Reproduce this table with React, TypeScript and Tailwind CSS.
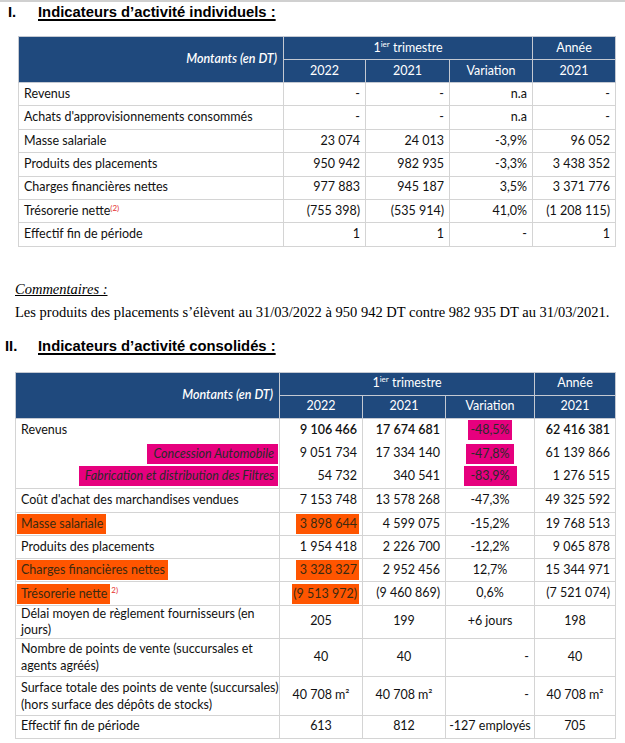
import React from "react"

const body = { fontFamily: "Lato, 'Open Sans', sans-serif" }

type Row1 = { label: React.ReactNode; v: string[] }

const rows1: Row1[] = [
  { label: "Revenus", v: ["-", "-", "n.a", "-"] },
  { label: "Achats d'approvisionnements consommés", v: ["-", "-", "n.a", "-"] },
  { label: "Masse salariale", v: ["23 074", "24 013", "-3,9%", "96 052"] },
  { label: "Produits des placements", v: ["950 942", "982 935", "-3,3%", "3 438 352"] },
  { label: "Charges financières nettes", v: ["977 883", "945 187", "3,5%", "3 371 776"] },
  {
    label: (
      <>
        Trésorerie nette<sup className="text-[8px] text-[#e53030] relative -top-[4px]">(2)</sup>
      </>
    ),
    v: ["(755 398)", "(535 914)", "41,0%", "(1 208 115)"],
  },
  { label: "Effectif fin de période", v: ["1", "1", "-", "1"] },
]

function Header() {
  return (
    <thead className="bg-[#1f497d] text-white">
      <tr className="h-[23px]">
        <td
          rowSpan={2}
          className="border border-[#c4c9d2] text-right pr-[6px] italic font-semibold align-middle"
        >
          Montants (en DT)
        </td>
        <td colSpan={3} className="border border-[#c4c9d2] text-center">
          1<sup className="text-[8px] relative -top-[5px]">ier</sup> trimestre
        </td>
        <td className="border border-[#c4c9d2] text-center">Année</td>
      </tr>
      <tr className="h-[23px]">
        <td className="border border-[#c4c9d2] text-center">2022</td>
        <td className="border border-[#c4c9d2] text-center">2021</td>
        <td className="border border-[#c4c9d2] text-center">Variation</td>
        <td className="border border-[#c4c9d2] text-center">2021</td>
      </tr>
    </thead>
  )
}

function Table1() {
  return (
    <table
      className="ml-[18px] mt-[14px] w-[597px] border-collapse table-fixed text-[12.5px] text-[#111]"
      style={body}
    >
      <colgroup>
        <col className="w-[265px]" />
        <col className="w-[82px]" />
        <col className="w-[84px]" />
        <col className="w-[83px]" />
        <col className="w-[83px]" />
      </colgroup>
      <Header />
      <tbody>
        {rows1.map((r, i) => (
          <tr key={i} className="h-[23.4px]">
            <td className="border border-[#d4d4d4] pl-[5px]">{r.label}</td>
            {r.v.map((x, j) => (
              <td key={j} className="border border-[#d4d4d4] text-right pr-[5px]">
                {x}
              </td>
            ))}
          </tr>
        ))}
      </tbody>
    </table>
  )
}

const cell = "border border-[#d4d4d4]"
const mag = "inline-block bg-[#e6007e] leading-[20px] text-[#2a2a2a]"
const org = "inline-block bg-[#ff5500] leading-[20px] text-[#3b2a10]"

function Table2() {
  return (
    <table
      className="ml-[15px] mt-[16px] w-[600px] border-collapse table-fixed text-[12.5px] text-[#111]"
      style={body}
    >
      <colgroup>
        <col className="w-[264px]" />
        <col className="w-[83px]" />
        <col className="w-[83px]" />
        <col className="w-[89px]" />
        <col className="w-[81px]" />
      </colgroup>
      <Header />
      <tbody>
        <tr className="h-[24px]">
          <td className="border-l border-r border-t border-[#d4d4d4] pl-[5px]">Revenus</td>
          <td className="border-x border-[#d4d4d4] text-right pr-[5px] font-semibold">9 106 466</td>
          <td className="border-x border-[#d4d4d4] text-right pr-[5px] font-semibold">17 674 681</td>
          <td className="border-x border-[#d4d4d4] text-center">
            <span className={`${mag} w-[44px]`}>-48,5%</span>
          </td>
          <td className="border-x border-[#d4d4d4] text-right pr-[5px] font-semibold">62 416 381</td>
        </tr>
        <tr className="h-[23px]">
          <td className="border-x border-[#d4d4d4] text-right pr-[1px]">
            <span className={`${mag} italic pl-[6px] pr-[4px]`}>Concession Automobile</span>
          </td>
          <td className="border-x border-[#d4d4d4] text-right pr-[5px]">9 051 734</td>
          <td className="border-x border-[#d4d4d4] text-right pr-[5px]">17 334 140</td>
          <td className="border-x border-[#d4d4d4] text-center">
            <span className={`${mag} w-[48px]`}>-47,8%</span>
          </td>
          <td className="border-x border-[#d4d4d4] text-right pr-[5px]">61 139 866</td>
        </tr>
        <tr className="h-[23px]">
          <td className="border-x border-b border-[#d4d4d4] text-right pr-[1px]">
            <span className={`${mag} italic pl-[6px] pr-[4px]`}>
              Fabrication et distribution des Filtres
            </span>
          </td>
          <td className="border-x border-b border-[#d4d4d4] text-right pr-[5px]">54 732</td>
          <td className="border-x border-b border-[#d4d4d4] text-right pr-[5px]">340 541</td>
          <td className="border-x border-b border-[#d4d4d4] text-center">
            <span className={`${mag} w-[53px]`}>-83,9%</span>
          </td>
          <td className="border-x border-b border-[#d4d4d4] text-right pr-[5px]">1 276 515</td>
        </tr>
        <tr className="h-[24.7px]">
          <td className={`${cell} pl-[5px]`}>Coût d'achat des marchandises vendues</td>
          <td className={`${cell} text-right pr-[5px]`}>7 153 748</td>
          <td className={`${cell} text-right pr-[5px]`}>13 578 268</td>
          <td className={`${cell} text-center`}>-47,3%</td>
          <td className={`${cell} text-right pr-[5px]`}>49 325 592</td>
        </tr>
        <tr className="h-[22.6px]">
          <td className={`${cell} pl-[1px]`}>
            <span className={`${org} pl-[4px] pr-[3px]`}>Masse salariale</span>
          </td>
          <td className={`${cell} text-right pr-[3px]`}>
            <span className={`${org} pr-[2px] pl-[4px]`}>3 898 644</span>
          </td>
          <td className={`${cell} text-right pr-[5px]`}>4 599 075</td>
          <td className={`${cell} text-center`}>-15,2%</td>
          <td className={`${cell} text-right pr-[5px]`}>19 768 513</td>
        </tr>
        <tr className="h-[23.4px]">
          <td className={`${cell} pl-[5px]`}>Produits des placements</td>
          <td className={`${cell} text-right pr-[5px]`}>1 954 418</td>
          <td className={`${cell} text-right pr-[5px]`}>2 226 700</td>
          <td className={`${cell} text-center`}>-12,2%</td>
          <td className={`${cell} text-right pr-[5px]`}>9 065 878</td>
        </tr>
        <tr className="h-[23px]">
          <td className={`${cell} pl-[1px]`}>
            <span className={`${org} pl-[4px] pr-[3px]`}>Charges financières nettes</span>
          </td>
          <td className={`${cell} text-right pr-[3px]`}>
            <span className={`${org} pr-[2px] pl-[4px]`}>3 328 327</span>
          </td>
          <td className={`${cell} text-right pr-[5px]`}>2 952 456</td>
          <td className={`${cell} text-center`}>12,7%</td>
          <td className={`${cell} text-right pr-[5px]`}>15 344 971</td>
        </tr>
        <tr className="h-[23.3px]">
          <td className={`${cell} pl-[1px]`}>
            <span className={`${org} pl-[4px] pr-[3px]`}>Trésorerie nette</span>
            <sup className="text-[8px] text-[#e53030] relative -top-[5px] ml-[1px]">2)</sup>
          </td>
          <td className={`${cell} text-right pr-[3px] overflow-hidden whitespace-nowrap`}>
            <span className={`${org} pr-[2px] pl-[1px]`}>(9 513 972)</span>
          </td>
          <td className={`${cell} text-right pr-[5px]`}>(9 460 869)</td>
          <td className={`${cell} text-center`}>0,6%</td>
          <td className={`${cell} text-right pr-[5px]`}>(7 521 074)</td>
        </tr>
        <tr className="h-[33px]">
          <td className={`${cell} pl-[5px] leading-[16px]`}>
            Délai moyen de règlement fournisseurs (en jours)
          </td>
          <td className={`${cell} text-center`}>205</td>
          <td className={`${cell} text-center`}>199</td>
          <td className={`${cell} text-center`}>+6 jours</td>
          <td className={`${cell} text-center`}>198</td>
        </tr>
        <tr className="h-[38px]">
          <td className={`${cell} pl-[5px] leading-[17px]`}>
            Nombre de points de vente (succursales et agents agréés)
          </td>
          <td className={`${cell} text-center`}>40</td>
          <td className={`${cell} text-center`}>40</td>
          <td className={`${cell} text-right pr-[5px]`}>-</td>
          <td className={`${cell} text-center`}>40</td>
        </tr>
        <tr className="h-[39px]">
          <td className={`${cell} pl-[5px] leading-[17px]`}>
            Surface totale des points de vente (succursales) (hors surface des dépôts de stocks)
          </td>
          <td className={`${cell} text-center`}>40 708 m²</td>
          <td className={`${cell} text-center`}>40 708 m²</td>
          <td className={`${cell} text-right pr-[5px]`}>-</td>
          <td className={`${cell} text-center`}>40 708 m²</td>
        </tr>
        <tr className="h-[23px]">
          <td className={`${cell} pl-[5px]`}>Effectif fin de période</td>
          <td className={`${cell} text-center`}>613</td>
          <td className={`${cell} text-center`}>812</td>
          <td className={`${cell} text-center`}>-127 employés</td>
          <td className={`${cell} text-center`}>705</td>
        </tr>
      </tbody>
    </table>
  )
}

function Heading({ num, text, numCls }: { num: string; text: string; numCls: string }) {
  return (
    <div
      className="flex items-center h-[20px] text-[14.8px] font-bold text-black"
      style={{ fontFamily: "'Liberation Sans', Arial, sans-serif" }}
    >
      <span className={numCls}>{num}</span>
      <span className="underline underline-offset-[2px] decoration-[1.5px]">{text}</span>
    </div>
  )
}

export default function App() {
  return (
    <div className="w-[625px] h-[743px] bg-white overflow-hidden border-t-2 border-[#d0d0d0]">
      <Heading num="I." text="Indicateurs d’activité individuels :" numCls="ml-[8px] w-[30px]" />
      <Table1 />
      <div
        className="text-[14.5px] text-black"
        style={{ fontFamily: "'Liberation Serif', 'Times New Roman', serif" }}
      >
        <p className="ml-[15px] mt-[33px] leading-[18px] italic underline">Commentaires :</p>
        <p className="ml-[15px] mt-[5px] leading-[18px] whitespace-nowrap">
          Les produits des placements s’élèvent au 31/03/2022 à 950 942 DT contre 982 935 DT au 31/03/2021.
        </p>
      </div>
      <div className="mt-[15px]">
        <Heading num="II." text="Indicateurs d’activité consolidés :" numCls="ml-[5px] w-[33px]" />
      </div>
      <Table2 />
    </div>
  )
}
